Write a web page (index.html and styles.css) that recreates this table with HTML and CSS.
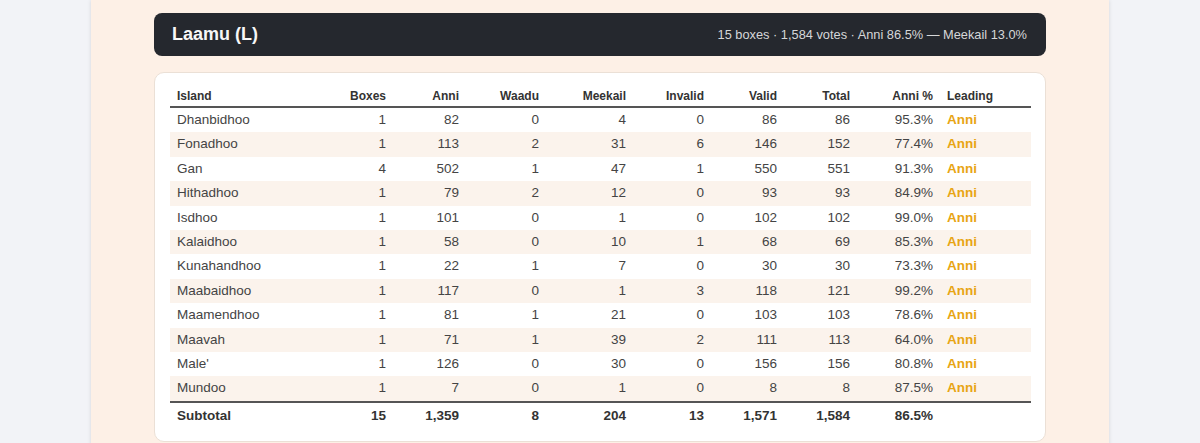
FILE: index.html
```html
<!DOCTYPE html>
<html>
<head>
<meta charset="utf-8">
<link rel="stylesheet" href="styles.css">
</head>
<body>
<div class="panel">
  <div class="atoll-head">
    <h2 class="atoll-title">Laamu (L)</h2>
    <div class="atoll-summary">15 boxes · 1,584 votes · Anni 86.5% — Meekail 13.0%</div>
  </div>
  <div class="card">
    <table class="results">
      <colgroup>
        <col class="c-island"><col class="c-boxes"><col class="c-anni"><col class="c-waadu"><col class="c-meekail"><col class="c-invalid"><col class="c-valid"><col class="c-total"><col class="c-pct"><col class="c-lead">
      </colgroup>
      <thead>
        <tr><th class="l">Island</th><th>Boxes</th><th>Anni</th><th>Waadu</th><th>Meekail</th><th>Invalid</th><th>Valid</th><th>Total</th><th>Anni %</th><th class="l">Leading</th></tr>
      </thead>
      <tbody>
        <tr><td class="l">Dhanbidhoo</td><td>1</td><td>82</td><td>0</td><td>4</td><td>0</td><td>86</td><td>86</td><td>95.3%</td><td class="lead">Anni</td></tr>
        <tr><td class="l">Fonadhoo</td><td>1</td><td>113</td><td>2</td><td>31</td><td>6</td><td>146</td><td>152</td><td>77.4%</td><td class="lead">Anni</td></tr>
        <tr><td class="l">Gan</td><td>4</td><td>502</td><td>1</td><td>47</td><td>1</td><td>550</td><td>551</td><td>91.3%</td><td class="lead">Anni</td></tr>
        <tr><td class="l">Hithadhoo</td><td>1</td><td>79</td><td>2</td><td>12</td><td>0</td><td>93</td><td>93</td><td>84.9%</td><td class="lead">Anni</td></tr>
        <tr><td class="l">Isdhoo</td><td>1</td><td>101</td><td>0</td><td>1</td><td>0</td><td>102</td><td>102</td><td>99.0%</td><td class="lead">Anni</td></tr>
        <tr><td class="l">Kalaidhoo</td><td>1</td><td>58</td><td>0</td><td>10</td><td>1</td><td>68</td><td>69</td><td>85.3%</td><td class="lead">Anni</td></tr>
        <tr><td class="l">Kunahandhoo</td><td>1</td><td>22</td><td>1</td><td>7</td><td>0</td><td>30</td><td>30</td><td>73.3%</td><td class="lead">Anni</td></tr>
        <tr><td class="l">Maabaidhoo</td><td>1</td><td>117</td><td>0</td><td>1</td><td>3</td><td>118</td><td>121</td><td>99.2%</td><td class="lead">Anni</td></tr>
        <tr><td class="l">Maamendhoo</td><td>1</td><td>81</td><td>1</td><td>21</td><td>0</td><td>103</td><td>103</td><td>78.6%</td><td class="lead">Anni</td></tr>
        <tr><td class="l">Maavah</td><td>1</td><td>71</td><td>1</td><td>39</td><td>2</td><td>111</td><td>113</td><td>64.0%</td><td class="lead">Anni</td></tr>
        <tr><td class="l">Male'</td><td>1</td><td>126</td><td>0</td><td>30</td><td>0</td><td>156</td><td>156</td><td>80.8%</td><td class="lead">Anni</td></tr>
        <tr><td class="l">Mundoo</td><td>1</td><td>7</td><td>0</td><td>1</td><td>0</td><td>8</td><td>8</td><td>87.5%</td><td class="lead">Anni</td></tr>
      </tbody>
      <tfoot>
        <tr><td class="l">Subtotal</td><td>15</td><td>1,359</td><td>8</td><td>204</td><td>13</td><td>1,571</td><td>1,584</td><td>86.5%</td><td class="l"></td></tr>
      </tfoot>
    </table>
  </div>
</div>
</body>
</html>
```
FILE: styles.css
```css
html, body {
  margin: 0;
  padding: 0;
}
body {
  background: #f2f3f7;
  font-family: "Liberation Sans", Arial, sans-serif;
  color: #444;
  height: 443px;
  overflow: hidden;
}
.panel {
  width: 1018px;
  margin: 0 auto;
  background: #fdf0e6;
  box-shadow: 0 0 4px rgba(0, 0, 0, 0.12);
  padding: 13px 63px 14px;
  box-sizing: border-box;
  min-height: 443px;
}
.atoll-head {
  background: #25282e;
  border-radius: 8px;
  height: 43px;
  padding: 0 19px 0 18px;
  display: flex;
  align-items: center;
  justify-content: space-between;
}
.atoll-title {
  margin: 0;
  font-size: 18px;
  font-weight: bold;
  color: #f7f7f7;
}
.atoll-summary {
  font-size: 12.8px;
  color: #d6d7d9;
}
.card {
  margin-top: 16px;
  background: #fff;
  border: 1px solid #ebe0d6;
  border-radius: 10px;
  padding: 13px 14px 13px 15px;
}
.results {
  width: 861px;
  border-collapse: collapse;
  table-layout: fixed;
}
.c-island { width: 161px; }
.c-boxes { width: 62px; }
.c-anni { width: 73px; }
.c-waadu { width: 80px; }
.c-meekail { width: 87px; }
.c-invalid { width: 78px; }
.c-valid { width: 73px; }
.c-total { width: 73px; }
.c-pct { width: 83px; }
.c-lead { width: 91px; }
.results th {
  font-size: 12px;
  font-weight: bold;
  color: #333;
  text-align: right;
  padding: 3px 7px 3px;
  line-height: 14px;
  border-bottom: 2px solid #555;
}
.results td {
  font-size: 13.5px;
  text-align: right;
  padding: 4px 7px;
  line-height: 16.4px;
  white-space: nowrap;
}
.results .l {
  text-align: left;
}
.results td.lead {
  text-align: left;
  color: #e8a514;
  font-weight: bold;
}
.results tbody tr:nth-child(even) td {
  background: #fbf3ec;
}
.results tfoot td {
  font-weight: bold;
  color: #333;
  border-top: 2px solid #555;
  padding-top: 5px;
  padding-bottom: 4px;
}
```
